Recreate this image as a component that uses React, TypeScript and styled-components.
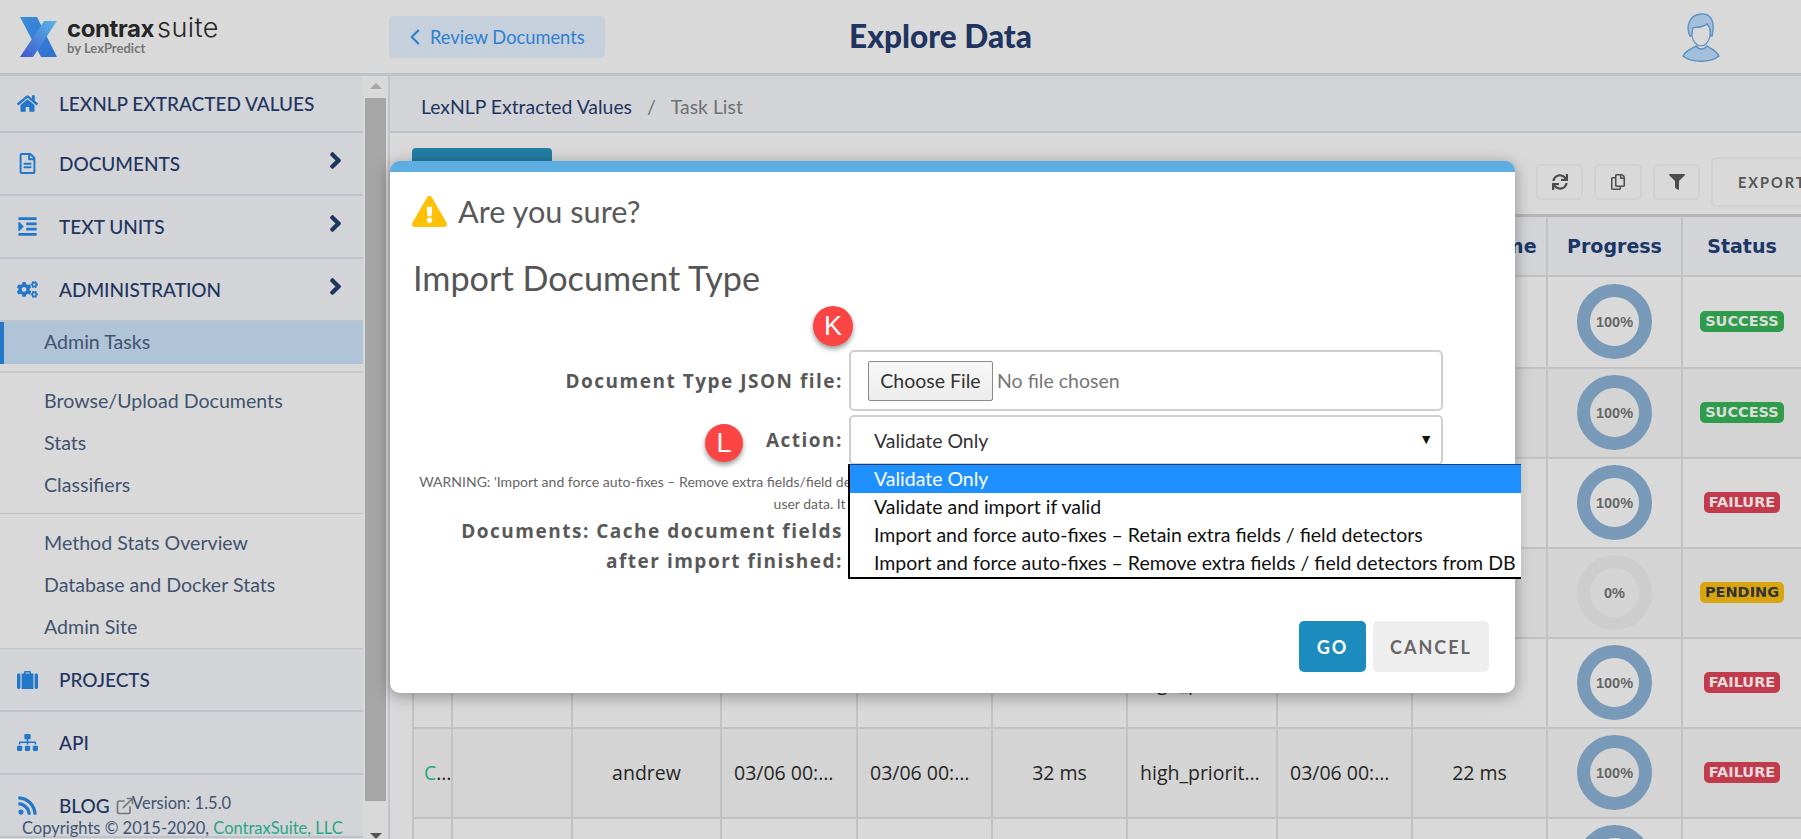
import * as React from 'react';
import styled, { createGlobalStyle } from 'styled-components';
import { FaHome, FaRegFileAlt, FaIndent, FaCogs, FaSitemap, FaRss, FaAngleRight, FaSync, FaRegCopy, FaFilter, FaExclamationTriangle } from 'react-icons/fa';
import { FiExternalLink, FiChevronLeft } from 'react-icons/fi';

const GlobalStyle = createGlobalStyle`
    html, body { margin: 0; padding: 0; height: 100%; overflow: hidden; background: #d9d9d9; }
    * { box-sizing: border-box; }
    body { font-family: 'Lato', 'Noto Sans', sans-serif; }
`;

const Page = styled.div`
    position: relative;
    width: 1801px;
    height: 839px;
    overflow: hidden;
    display: flex;
    flex-direction: column;
`;

const TopBar = styled.header`
    height: 76px;
    flex: none;
    display: flex;
    align-items: flex-start;
    background: #d9d9d9;
    border-bottom: 3px solid #bfc3ca;
`;

const Brand = styled.div`
    width: 389px;
    flex: none;
    display: flex;
    padding: 16px 0 0 20px;
    gap: 10px;
`;

const BrandText = styled.div`
    display: flex;
    flex-direction: column;
`;

const BrandName = styled.div`
    font-family: 'Inter', sans-serif;
    font-size: 24px;
    line-height: 24px;
    letter-spacing: -0.4px;
    color: #262626;
    font-weight: 700;
    white-space: nowrap;
    span { font-weight: 300; font-size: 27px; letter-spacing: 0.4px; margin-left: 3px; }
`;

const BrandSub = styled.div`
    font-size: 13px;
    font-weight: 700;
    line-height: 15px;
    color: #767676;
`;

const ReviewButton = styled.div`
    margin-top: 16px;
    width: 216px;
    height: 42px;
    background: #c6d0dc;
    border-radius: 5px;
    display: flex;
    align-items: center;
    padding-left: 13px;
    gap: 2px;
    color: #2f7fd0;
    font-size: 18.3px;
    svg { font-size: 26px; flex: none; }
`;

const PageTitle = styled.h1`
    margin: 18px 0 0 244px;
    font-size: 31.6px;
    line-height: 36px;
    font-weight: 900;
    color: #1f3560;
`;

const Avatar = styled.svg`
    margin: 12px 0 0 0;
    position: absolute;
    left: 1681px;
    top: 0;
`;

const Body = styled.div`
    flex: 1;
    display: flex;
    min-height: 0;
`;

const Sidebar = styled.aside`
    position: relative;
    width: 363px;
    flex: none;
    overflow: hidden;
    background: #d9d9d9;
`;

const NavItem = styled.div<{ $h?: number }>`
    height: ${({ $h }) => $h || 63}px;
    display: flex;
    align-items: center;
    background: #d2d4d8;
    border-bottom: 2px solid #bcc3cc;
    color: #1f3560;
    font-size: 19px;
    font-weight: 500;
    padding-left: 17px;
    position: relative;
`;

const NavIcon = styled.span`
    width: 42px;
    flex: none;
    display: flex;
    align-items: center;
    color: #2277c9;
    font-size: 21px;
`;

const NavArrow = styled.span`
    position: absolute;
    right: 14px;
    top: 14px;
    font-size: 27px;
    display: flex;
    color: #1f3560;
`;

const SubActive = styled.div`
    height: 42px;
    background: #b0c4d8;
    border-left: 4px solid #2277c9;
    padding: 0 0 3px 40px;
    display: flex;
    align-items: center;
    color: #42536f;
    font-size: 19.6px;
`;

const SubGroup = styled.div<{ $pad: string; $border?: boolean }>`
    padding: ${({ $pad }) => $pad};
    border-bottom: ${({ $border }) => ($border ? '1px solid #bcc3cc' : 'none')};
`;

const SubLink = styled.div`
    height: 42px;
    padding: 0 0 2px 44px;
    display: flex;
    align-items: center;
    color: #42536f;
    font-size: 19.6px;
`;

const Divider = styled.div`
    height: 2px;
    margin-top: 7px;
    background: #c6c9ce;
`;

const VersionText = styled.div`
    position: absolute;
    left: 132px;
    top: 717px;
    font-size: 16.5px;
    line-height: 20px;
    color: #42536f;
`;

const CopyText = styled.div`
    position: absolute;
    left: 22px;
    top: 742px;
    font-size: 16.5px;
    line-height: 20px;
    color: #42536f;
    white-space: nowrap;
    span { color: #2aa585; }
`;

const LinkGlyph = styled.span`
    display: flex;
    margin-left: 5px;
    color: #777;
    font-size: 20px;
`;

const ScrollTrack = styled.div`
    position: relative;
    width: 26px;
    flex: none;
    background: #d9d9d9;
    border-right: 1px solid #bfc3ca;
    padding: 22px 2px 0;
`;

const ScrollThumb = styled.div`
    width: 21px;
    height: 703px;
    background: #a6a6a6;
`;

const ScrollArrow = styled.div<{ $down?: boolean }>`
    position: absolute;
    left: 7px;
    ${({ $down }) => ($down ? 'bottom: 0;' : 'top: 7px;')}
    width: 0;
    height: 0;
    border-left: 6px solid transparent;
    border-right: 6px solid transparent;
    ${({ $down }) => ($down ? 'border-top: 6px solid #555;' : 'border-bottom: 6px solid #a6a6a6;')}
`;

const Main = styled.main`
    flex: 1;
    min-width: 0;
    overflow: hidden;
    border-left: 1px solid #bfc3ca;
`;

const Breadcrumb = styled.div`
    height: 57px;
    background: #d2d4d8;
    border-bottom: 2px solid #bcc3cc;
    display: flex;
    align-items: center;
    padding: 6px 0 0 31px;
    font-size: 19.4px;
    color: #1f3560;
    i { font-style: normal; color: #707070; margin: 0 15px; }
    b { font-weight: 400; color: #707070; }
`;

const Toolbar = styled.div`
    height: 81px;
    position: relative;
    display: flex;
    padding-left: 22px;
`;

const TealTab = styled.div`
    width: 140px;
    flex: none;
    height: 40px;
    margin-top: 15px;
    background: #227ea4;
    border-radius: 4px 4px 0 0;
`;

const ToolGroup = styled.div`
    margin-left: 984px;
    display: flex;
    gap: 11px;
    flex: none;
    align-items: flex-start;
`;

const ToolButton = styled.div<{ $w: number }>`
    width: ${({ $w }) => $w}px;
    height: 36px;
    margin-top: 31px;
    border: 2px solid #d1d1d1;
    border-radius: 5px;
    display: flex;
    align-items: center;
    justify-content: center;
    color: #4d4d4d;
    font-size: 16px;
`;

const ExportButton = styled.div`
    width: 130px;
    height: 50px;
    margin-top: 24px;
    border: 2px solid #d1d1d1;
    border-radius: 6px;
    padding-left: 25px;
    display: flex;
    align-items: center;
    font-size: 14.5px;
    font-weight: 700;
    letter-spacing: 2px;
    color: #555;
`;

const TaskTable = styled.table`
    margin-left: 22px;
    width: 1389px;
    table-layout: fixed;
    border-collapse: collapse;
    border-top: 3px solid #b5b5b5;
    th, td {
        border: 2px solid #c2c2c2;
        text-align: center;
        padding: 0 12px;
        white-space: nowrap;
        overflow: hidden;
        text-overflow: ellipsis;
    }
    th {
        height: 60px;
        padding: 0 4px;
        background: #d2d4d8;
        color: #1a3768;
        font-family: 'DejaVu Sans', sans-serif;
        font-size: 19px;
        font-weight: 700;
    }
    td {
        height: 90px;
        font-family: 'Open Sans', sans-serif;
        font-size: 19.5px;
        color: #262626;
    }
    td:first-child { padding: 0 8px 0 10px; }
    tbody tr:nth-child(odd) { background: #d9d9d9; }
    tbody tr:nth-child(even) { background: #d4d4d4; }
    tbody tr:first-child td { height: 92px; }
`;

const TaskLink = styled.span`
    color: #2aa585;
`;

const Donut = styled.div<{ $done: boolean }>`
    width: 75px;
    height: 75px;
    margin: 0 auto;
    border-radius: 50%;
    border: 13px solid ${({ $done }) => ($done ? '#7899b8' : '#cdcdcd')};
    display: flex;
    align-items: center;
    justify-content: center;
    font-family: 'Liberation Sans', sans-serif;
    font-size: 14.5px;
    font-weight: 700;
    color: #666;
`;

const statusColors: Record<string, [string, string]> = {
    SUCCESS: ['#2e9c4b', '#dcdcdc'],
    FAILURE: ['#c23b4c', '#e3dcdc'],
    PENDING: ['#d9a50f', '#333333'],
};

const Badge = styled.span<{ $status: string }>`
    display: inline-block;
    vertical-align: middle;
    margin-bottom: 4px;
    height: 21px;
    line-height: 21px;
    padding: 0 5px;
    border-radius: 5px;
    font-family: 'DejaVu Sans', sans-serif;
    font-size: 14.5px;
    font-weight: 700;
    background: ${({ $status }) => statusColors[$status][0]};
    color: ${({ $status }) => statusColors[$status][1]};
`;

const Modal = styled.section`
    position: absolute;
    left: 390px;
    top: 161px;
    width: 1125px;
    height: 532px;
    background: #fff;
    border-radius: 10px;
    border-top: 11px solid #5dade2;
    box-shadow: 0 3px 16px rgba(0, 0, 0, 0.35);
    padding: 0 23px;
    color: #555;
`;

const ConfirmRow = styled.div`
    display: flex;
    align-items: center;
    margin-top: 22px;
    gap: 11px;
    height: 34px;
    font-size: 30.7px;
    color: #595959;
    svg { color: #ffc107; font-size: 35px; margin-left: -1px; }
`;

const ModalTitle = styled.h2`
    margin: 30px 0 0;
    font-size: 34.2px;
    line-height: 40px;
    font-weight: 400;
    color: #555;
`;

const FormRow = styled.div<{ $top: number }>`
    display: grid;
    grid-template-columns: 430px 594px;
    column-gap: 6px;
    margin-top: ${({ $top }) => $top}px;
`;

const FieldLabel = styled.label`
    display: block;
    text-align: right;
    align-self: center;
    font-family: 'Open Sans', sans-serif;
    font-size: 19px;
    font-weight: 700;
    letter-spacing: 1.5px;
    line-height: 30px;
    white-space: nowrap;
    color: #585858;
`;

const FileBox = styled.div`
    height: 61px;
    border: 2px solid #cfcfcf;
    border-radius: 5px;
    display: flex;
    align-items: center;
    padding-left: 17px;
    font-size: 19.5px;
    color: #777;
`;

const FileButton = styled.div`
    width: 125px;
    height: 40px;
    margin-right: 4px;
    background: linear-gradient(#f8f8f8, #ececec);
    border: 1px solid #8a8a8a;
    border-radius: 2px;
    display: flex;
    align-items: center;
    justify-content: center;
    color: #333;
`;

const SelectBox = styled.div`
    height: 50px;
    border: 2px solid #cfcfcf;
    border-radius: 5px;
    display: flex;
    align-items: center;
    justify-content: space-between;
    padding: 0 8px 0 23px;
    font-size: 19.5px;
    color: #333;
    span { font-size: 14px; color: #111; margin-top: -4px; }
`;

const Warning = styled.p`
    margin: 6px 0 0;
    font-size: 14px;
    line-height: 22px;
    text-align: center;
    color: #666;
    white-space: nowrap;
`;

const CacheRow = styled.div`
    width: 430px;
    margin-top: 1px;
`;

const Dropdown = styled.ul`
    position: absolute;
    left: 458px;
    top: 292px;
    width: 673px;
    margin: 0;
    padding: 0;
    list-style: none;
    background: #fff;
    border-left: 2px solid #000;
    border-bottom: 2px solid #000;
    border-top: 1px solid #1e3f7a;
`;

const DropOption = styled.li<{ $active?: boolean }>`
    height: 28px;
    line-height: 28px;
    padding-left: 24px;
    font-size: 19.5px;
    white-space: nowrap;
    background: ${({ $active }) => ($active ? '#1e90ff' : '#fff')};
    color: ${({ $active }) => ($active ? '#fff' : '#111')};
`;

const Marker = styled.div<{ $x: number; $y: number; $size: number }>`
    position: absolute;
    left: ${({ $x }) => $x}px;
    top: ${({ $y }) => $y}px;
    width: ${({ $size }) => $size}px;
    height: ${({ $size }) => $size}px;
    border-radius: 50%;
    background: #fb4444;
    box-shadow: 0 3px 5px rgba(0, 0, 0, 0.4);
    color: #fff;
    font-family: 'Liberation Sans', sans-serif;
    font-size: 27px;
    display: flex;
    align-items: center;
    justify-content: center;
`;

const ModalActions = styled.div`
    position: absolute;
    right: 26px;
    bottom: 21px;
    display: flex;
    gap: 7px;
`;

const ActionButton = styled.div<{ $primary?: boolean; $w: number }>`
    width: ${({ $w }) => $w}px;
    height: 51px;
    border-radius: 5px;
    display: flex;
    align-items: center;
    justify-content: center;
    font-size: 18px;
    font-weight: 700;
    letter-spacing: 2px;
    background: ${({ $primary }) => ($primary ? '#1c8cbf' : '#eeeeee')};
    color: ${({ $primary }) => ($primary ? '#fff' : '#666')};
`;

const LogoMark = () => (
    <svg width="37" height="42" viewBox="0 0 37 42">
        <defs>
            <linearGradient id="logoA" x1="0" y1="0" x2="1" y2="1">
                <stop offset="0" stopColor="#3c8ddb" />
                <stop offset="1" stopColor="#2f6fd0" />
            </linearGradient>
            <linearGradient id="logoB" x1="0" y1="1" x2="1" y2="0">
                <stop offset="0" stopColor="#4056cf" />
                <stop offset="1" stopColor="#58b8e6" />
            </linearGradient>
        </defs>
        <path d="M0 1 H17 L37 41 H21 Z" fill="url(#logoA)" />
        <path d="M37 5 H24 L0 41 H13 Z" fill="url(#logoB)" />
    </svg>
);

const BriefcaseIcon = () => (
    <svg width="21" height="19" viewBox="0 0 21 19">
        <path d="M7 4 V2 Q7 1 8 1 H13 Q14 1 14 2 V4 H12.6 V2.4 H8.4 V4 Z" fill="currentColor" />
        <rect x="0" y="3.5" width="3.4" height="15.5" rx="1.4" fill="currentColor" />
        <rect x="4.6" y="3.5" width="11.8" height="15.5" fill="currentColor" />
        <rect x="17.6" y="3.5" width="3.4" height="15.5" rx="1.4" fill="currentColor" />
    </svg>
);

const UserIcon = () => (
    <Avatar width="40" height="50" viewBox="0 0 40 50">
        <path d="M2 44 C5 38 11 37 15 34 C18 38 23 38 26 34 C30 37 35 38 38 44 C30 51 10 51 2 44 Z" fill="#a3bfdb" stroke="#5a90c3" strokeWidth="1.4" />
        <path d="M9 24 C5 16 7 3 20 2 C31 1 34 11 31 24 L29 24 C30 18 28 14 26 12 C22 16 15 15 12 16 C11 19 11 21 11 24 Z" fill="#a3bfdb" stroke="#5a90c3" strokeWidth="1.4" />
        <path d="M11 24 C11 21 11 19 12 16 C15 15 22 16 26 12 C28 14 30 18 29 24 C28 30 24 34 20 34 C16 34 12 30 11 24 Z" fill="#d9d9d9" stroke="#5a90c3" strokeWidth="1.2" />
    </Avatar>
);

const rows = [
    { pct: 100, status: 'SUCCESS' },
    { pct: 100, status: 'SUCCESS' },
    { pct: 100, status: 'FAILURE' },
    { pct: 0, status: 'PENDING' },
    { pct: 100, status: 'FAILURE' },
    { pct: 100, status: 'FAILURE' },
    { pct: 100, status: 'FAILURE' },
];

const colWidths = [39, 120, 149, 136, 135, 135, 150, 135, 135, 135, 120];

export default function App() {
    return (
        <Page>
            <GlobalStyle />
            <TopBar>
                <Brand>
                    <LogoMark />
                    <BrandText>
                        <BrandName>contrax<span>suite</span></BrandName>
                        <BrandSub>by LexPredict</BrandSub>
                    </BrandText>
                </Brand>
                <ReviewButton><FiChevronLeft />Review Documents</ReviewButton>
                <PageTitle>Explore Data</PageTitle>
                <UserIcon />
            </TopBar>
            <Body>
                <Sidebar>
                    <NavItem $h={57}><NavIcon><FaHome /></NavIcon>LEXNLP EXTRACTED VALUES</NavItem>
                    <NavItem><NavIcon><FaRegFileAlt /></NavIcon>DOCUMENTS<NavArrow><FaAngleRight /></NavArrow></NavItem>
                    <NavItem><NavIcon><FaIndent /></NavIcon>TEXT UNITS<NavArrow><FaAngleRight /></NavArrow></NavItem>
                    <NavItem><NavIcon><FaCogs /></NavIcon>ADMINISTRATION<NavArrow><FaAngleRight /></NavArrow></NavItem>
                    <SubActive>Admin Tasks</SubActive>
                    <Divider />
                    <SubGroup $pad="7px 0 7px" $border>
                        <SubLink>Browse/Upload Documents</SubLink>
                        <SubLink>Stats</SubLink>
                        <SubLink>Classifiers</SubLink>
                    </SubGroup>
                    <SubGroup $pad="8px 0 0" $border>
                        <SubLink>Method Stats Overview</SubLink>
                        <SubLink>Database and Docker Stats</SubLink>
                        <SubLink>Admin Site</SubLink>
                    </SubGroup>
                    <NavItem><NavIcon><BriefcaseIcon /></NavIcon>PROJECTS</NavItem>
                    <NavItem><NavIcon><FaSitemap /></NavIcon>API</NavItem>
                    <NavItem><NavIcon><FaRss /></NavIcon>BLOG<LinkGlyph><FiExternalLink /></LinkGlyph></NavItem>
                    <VersionText>Version: 1.5.0</VersionText>
                    <CopyText>Copyrights © 2015-2020, <span>ContraxSuite, LLC</span></CopyText>
                </Sidebar>
                <ScrollTrack>
                    <ScrollArrow />
                    <ScrollThumb />
                    <ScrollArrow $down />
                </ScrollTrack>
                <Main>
                    <Breadcrumb>LexNLP Extracted Values<i>/</i><b>Task List</b></Breadcrumb>
                    <Toolbar>
                        <TealTab />
                        <ToolGroup>
                            <ToolButton $w={47}><FaSync /></ToolButton>
                            <ToolButton $w={48}><FaRegCopy /></ToolButton>
                            <ToolButton $w={47}><FaFilter /></ToolButton>
                            <ExportButton>EXPORT</ExportButton>
                        </ToolGroup>
                    </Toolbar>
                    <TaskTable>
                        <colgroup>
                            {colWidths.map((w, i) => <col key={i} style={{ width: w }} />)}
                        </colgroup>
                        <thead>
                            <tr>
                                <th></th>
                                <th></th>
                                <th>User</th>
                                <th>Date Start</th>
                                <th>Date Work Start</th>
                                <th>Duration</th>
                                <th>Queue</th>
                                <th>Date Done</th>
                                <th>Work Time</th>
                                <th>Progress</th>
                                <th>Status</th>
                            </tr>
                        </thead>
                        <tbody>
                            {rows.map((row, i) => (
                                <tr key={i}>
                                    <td><TaskLink>Clean</TaskLink></td>
                                    <td></td>
                                    <td>andrew</td>
                                    <td>03/06 00:32:10</td>
                                    <td>03/06 00:32:10</td>
                                    <td>32 ms</td>
                                    <td>high_priority_task</td>
                                    <td>03/06 00:32:10</td>
                                    <td>22 ms</td>
                                    <td><Donut $done={row.pct > 0}>{row.pct}%</Donut></td>
                                    <td><Badge $status={row.status}>{row.status}</Badge></td>
                                </tr>
                            ))}
                        </tbody>
                    </TaskTable>
                </Main>
            </Body>
            <Modal>
                <ConfirmRow><FaExclamationTriangle />Are you sure?</ConfirmRow>
                <ModalTitle>Import Document Type</ModalTitle>
                <FormRow $top={52}>
                    <FieldLabel>Document Type JSON file:</FieldLabel>
                    <FileBox><FileButton>Choose File</FileButton>No file chosen</FileBox>
                </FormRow>
                <FormRow $top={4}>
                    <FieldLabel>Action:</FieldLabel>
                    <SelectBox>Validate Only<span>▼</span></SelectBox>
                </FormRow>
                <Warning>
                    WARNING: 'Import and force auto-fixes – Remove extra fields/field detectors from DB' may delete existing field detectors and related data, so only use it if you are really sure.<br />
                    user data. It is recommended to back up the database first.
                </Warning>
                <CacheRow><FieldLabel as="div">Documents: Cache document fields<br />after import finished:</FieldLabel></CacheRow>
                <Dropdown>
                    <DropOption $active>Validate Only</DropOption>
                    <DropOption>Validate and import if valid</DropOption>
                    <DropOption>Import and force auto-fixes – Retain extra fields / field detectors</DropOption>
                    <DropOption>Import and force auto-fixes – Remove extra fields / field detectors from DB</DropOption>
                </Dropdown>
                <Marker $x={423} $y={134} $size={40}>K</Marker>
                <Marker $x={315} $y={252} $size={38}>L</Marker>
                <ModalActions>
                    <ActionButton $primary $w={67}>GO</ActionButton>
                    <ActionButton $w={116}>CANCEL</ActionButton>
                </ModalActions>
            </Modal>
        </Page>
    );
}
